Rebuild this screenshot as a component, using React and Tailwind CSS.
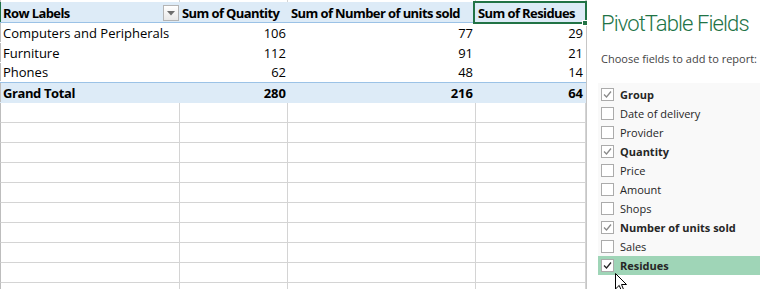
const rows = [
  { label: 'Computers and Peripherals', q: 106, u: 77, r: 29 },
  { label: 'Furniture', q: 112, u: 91, r: 21 },
  { label: 'Phones', q: 62, u: 48, r: 14 },
]

const fields = [
  { name: 'Group', on: true },
  { name: 'Date of delivery' },
  { name: 'Provider' },
  { name: 'Quantity', on: true },
  { name: 'Price' },
  { name: 'Amount' },
  { name: 'Shops' },
  { name: 'Number of units sold', on: true },
  { name: 'Sales' },
  { name: 'Residues', on: true, hover: true },
]

const cols = 'grid grid-cols-[180px_108px_188px_110px]'
const cell = 'flex items-end leading-[18px] overflow-hidden whitespace-nowrap'

function Check({ on, hover }) {
  return (
    <span className="w-[13px] h-[13px] shrink-0 border border-[#ababab] bg-white flex items-center justify-center">
      {on && (
        <svg width="11" height="11" viewBox="0 0 11 11">
          <polyline points="2,5.5 4.5,8 9,2.5" fill="none" stroke={hover ? '#262626' : '#8a8a8a'} strokeWidth="1.3" />
        </svg>
      )}
    </span>
  )
}

function EmptyRow() {
  return (
    <div className={`${cols} h-[20px]`}>
      <div className="border-l border-l-[#bdbdbd] border-r border-b border-[#d4d4d4]" />
      <div className="border-r border-b border-[#d4d4d4]" />
      <div className="border-r border-b border-[#d4d4d4]" />
      <div className="border-r border-b border-[#d4d4d4]" />
    </div>
  )
}

export default function App() {
  return (
    <div className="relative flex w-[760px] h-[289px] overflow-hidden bg-white text-[#000]" style={{ fontFamily: '"Open Sans", sans-serif' }}>
      <div className="w-[586px] shrink-0 text-[13px]">
        <div className={`${cols} h-[2px]`}>
          <div className="border-l border-[#bdbdbd] border-r border-r-[#d4d4d4]" />
          <div className="border-r border-[#d4d4d4]" />
          <div className="border-r border-[#d4d4d4]" />
          <div className="border-r border-[#d4d4d4]" />
        </div>

        <div className={`${cols} h-[21px] bg-[#ddebf7] border-b border-[#9bc2e6] font-bold tracking-[-0.6px]`}>
          <div className="flex items-end justify-between border-l border-[#217346] pl-[2px] pr-[1px]">
            <span className="leading-[18px]">Row Labels</span>
            <span className="w-[16px] h-[16px] mb-[1px] border border-[#b4b4b4] bg-gradient-to-b from-white to-[#e8e8e8] flex items-center justify-center">
              <svg width="8" height="5" viewBox="0 0 8 5"><polygon points="0,0 8,0 4,4.5" fill="#6d6d6d" /></svg>
            </span>
          </div>
          <div className={`${cell} pl-[2px]`}>Sum of Quantity</div>
          <div className={`${cell} pl-[3px]`}>Sum of Number of units sold</div>
          <div className={`${cell} pl-[2px]`}>Sum of Residues</div>
        </div>

        {rows.map((row, i) => (
          <div key={row.label} className={`${cols} h-[20px] pb-[1px] ${i === rows.length - 1 ? 'border-b border-[#9bc2e6]' : ''}`}>
            <div className={`${cell} border-l border-[#bdbdbd] pl-[2px]`}>{row.label}</div>
            <div className={`${cell} justify-end pr-[2px]`}>{row.q}</div>
            <div className={`${cell} justify-end pr-[3px]`}>{row.u}</div>
            <div className={`${cell} justify-end pr-[3px]`}>{row.r}</div>
          </div>
        ))}

        <div className={`${cols} h-[20px] pb-[1px] bg-[#ddebf7] font-bold`}>
          <div className={`${cell} border-l border-[#bdbdbd] pl-[2px] tracking-[-0.4px]`}>Grand Total</div>
          <div className={`${cell} justify-end pr-[2px]`}>280</div>
          <div className={`${cell} justify-end pr-[3px]`}>216</div>
          <div className={`${cell} justify-end pr-[3px]`}>64</div>
        </div>

        {Array.from({ length: 10 }).map((_, i) => (
          <EmptyRow key={i} />
        ))}
      </div>

      <div className="flex-1 border-l border-[#c6c6c6] bg-white">
        <div className="pl-[14px] pt-[11px] text-[22px] leading-[26px] font-light tracking-[-0.9px] text-[#217346] whitespace-nowrap" style={{ fontFamily: 'Roboto, sans-serif' }}>
          PivotTable Fields
        </div>
        <div className="pl-[14px] pt-[14px] text-[11px] leading-[15px] text-[#444] whitespace-nowrap">
          Choose fields to add to report:
        </div>
        <div className="ml-[11px] mt-[17px] bg-[#f9f9f9] pt-[2px] text-[11px] text-[#262626]">
          {fields.map(f => (
            <div key={f.name} className={`flex items-center gap-[6px] h-[19px] pl-[3px] whitespace-nowrap ${f.hover ? 'bg-[#9fd5b7]' : ''} ${f.on ? 'font-bold' : ''}`}>
              <Check on={f.on} hover={f.hover} />
              <span className="leading-[15px]">{f.name}</span>
            </div>
          ))}
        </div>
      </div>

      <div className="absolute left-[473px] top-[1px] w-[114px] h-[23px] border-2 border-[#217346]" />
      <div className="absolute left-[582px] top-[20px] w-[6px] h-[6px] bg-[#217346] border border-white" />

      <svg className="absolute left-[615px] top-[273px]" width="13" height="20" viewBox="0 0 13 20">
        <path d="M0.5 0.5 L0.5 16 L4.2 12.4 L6.8 18.6 L9 17.6 L6.5 11.5 L11.5 11.5 Z" fill="#fff" stroke="#000" strokeWidth="1" strokeLinejoin="miter" />
      </svg>
    </div>
  )
}
